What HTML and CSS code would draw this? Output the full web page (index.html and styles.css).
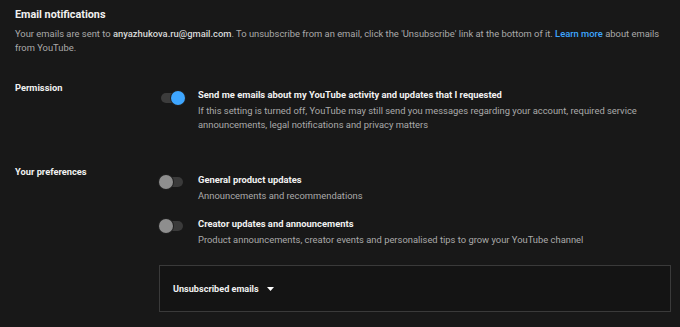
FILE: index.html
```html
<!DOCTYPE html>
<html>
<head>
<meta charset="utf-8">
<link rel="stylesheet" href="styles.css">
</head>
<body>
<div class="page">
  <h1 class="title">Email notifications</h1>
  <p class="intro">Your emails are sent to <b>anyazhukova.ru@gmail.com</b>. To unsubscribe from an email, click the 'Unsubscribe' link at the bottom of it. <a class="link">Learn more</a> about emails from YouTube.</p>

  <div class="section perm">
    <div class="label">Permission</div>
    <div class="items">
      <div class="item">
        <span class="toggle on"><span class="knob"></span></span>
        <div class="text">
          <div class="name">Send me emails about my YouTube activity and updates that I requested</div>
          <div class="desc">If this setting is turned off, YouTube may still send you messages regarding your account, required service announcements, legal notifications and privacy matters</div>
        </div>
      </div>
    </div>
  </div>

  <div class="section prefs">
    <div class="label">Your preferences</div>
    <div class="items">
      <div class="item">
        <span class="toggle"><span class="knob"></span></span>
        <div class="text">
          <div class="name">General product updates</div>
          <div class="desc">Announcements and recommendations</div>
        </div>
      </div>
      <div class="item">
        <span class="toggle"><span class="knob"></span></span>
        <div class="text">
          <div class="name">Creator updates and announcements</div>
          <div class="desc">Product announcements, creator events and personalised tips to grow your YouTube channel</div>
        </div>
      </div>
      <div class="box">
        <span class="box-label">Unsubscribed emails</span>
        <svg class="caret" width="7" height="4" viewBox="0 0 7 4"><path d="M0 0h7L3.5 4z" fill="#fff"/></svg>
      </div>
    </div>
  </div>
</div>
</body>
</html>
```

FILE: styles.css
```css
html, body {
  margin: 0;
  padding: 0;
  background: #181818;
  height: 100%;
}
body {
  font-family: Roboto, "Liberation Sans", sans-serif;
  color: #aaaaaa;
  font-size: 9.4px;
  overflow: hidden;
}
.page {
  padding: 7px 9px 0 15px;
}
.title {
  margin: 0;
  font-size: 10.8px;
  line-height: 16px;
  font-weight: 700;
  color: #f1f1f1;
}
.intro {
  margin: 4px 0 0 0;
  line-height: 14px;
  color: #aaaaaa;
}
.intro b {
  font-weight: 500;
  color: #d8d8d8;
}
.link {
  color: #3ea6ff;
  font-weight: 500;
}
.section {
  display: flex;
}
.perm {
  margin-top: 26px;
}
.prefs {
  margin-top: 33px;
}
.label {
  width: 144px;
  flex: none;
  font-weight: 700;
  font-size: 9.3px;
  color: #f1f1f1;
  line-height: 14px;
}
.items {
  flex: 1;
  display: flex;
  flex-direction: column;
}
.item {
  display: flex;
  align-items: flex-start;
}
.perm .item { padding-top: 7px; }
.prefs .item { padding-top: 8px; }
.prefs .item + .item { padding-top: 0; margin-top: 14px; }
.toggle {
  position: relative;
  width: 22px;
  height: 10px;
  border-radius: 5px;
  background: #3a3a3a;
  margin: 4px 15px 0 2px;
  flex: none;
}
.toggle .knob {
  position: absolute;
  top: -2px;
  left: -2px;
  width: 14px;
  height: 14px;
  border-radius: 50%;
  background: #8e8e8e;
  box-shadow: 0 0 0 1px #202020;
}
.toggle.on {
  background: #3c3c3c;
  margin-top: 5px;
}
.toggle.on .knob {
  left: auto;
  right: -2px;
  background: #3ea6ff;
}
.name {
  font-weight: 700;
  color: #f1f1f1;
  font-size: 9.4px;
  line-height: 14px;
}
.desc {
  line-height: 14px;
  color: #aaaaaa;
  margin-top: 2px;
}
.box {
  margin-top: 18px;
  height: 45px;
  border: 1px solid #3a3a3a;
  background: #141414;
  display: flex;
  align-items: center;
  padding-left: 13px;
  gap: 8px;
}
.box-label {
  font-weight: 700;
  color: #f1f1f1;
  font-size: 9.1px;
}
.caret { margin-top: 1px; }
```
